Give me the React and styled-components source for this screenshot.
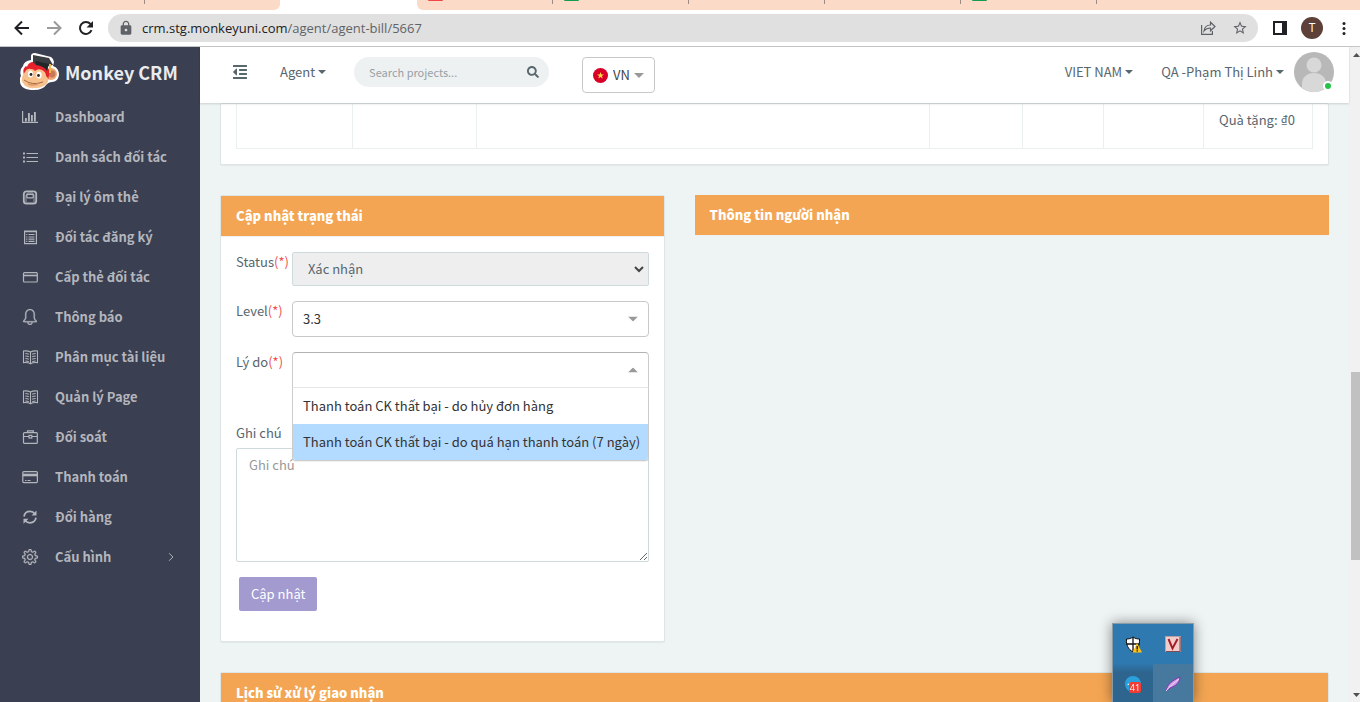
import React, { useState } from 'react';
import styled, { createGlobalStyle, css } from 'styled-components';
import { FaOutdent, FaSearch } from 'react-icons/fa';
import { SlBell, SlSettings } from 'react-icons/sl';
import { MdLock, MdStarOutline } from 'react-icons/md';

const GlobalStyle = createGlobalStyle`
    *, *::before, *::after{
        box-sizing: border-box;
    }
    body{
        margin: 0;
        overflow: hidden;
        background: #eef3f4;
    }
    body, button, input, select, textarea{
        font-family: "Noto Sans CJK SC", "Noto Sans", sans-serif;
        font-size: 13px;
        line-height: 20px;
        color: #58666e;
    }
    a{
        color: inherit;
        text-decoration: none;
    }
`;

const WindowStyle = styled.div`
    display: flex;
    flex-direction: column;
    height: 100vh;
`;

/* browser bar */

const TabStripStyle = styled.div`
    display: flex;
    height: 10px;
    flex: none;
    background: #fff;
`;

const TabGroupStyle = styled.div`
    display: flex;
    flex: ${props => props.$grow ? '1' : '0 0 280px'};
    background: #fcdac8;
    border-radius: ${props => props.$grow ? '0 0 0 6px' : '0 0 6px 0'};
`;

const TabStyle = styled.div`
    width: ${props => props.$width || 136}px;
    height: 4px;
    padding-left: 11px;
    border-right: 1px solid #9b8a82;

    &::before{
        content: '';
        display: block;
        width: 15px;
        height: 1px;
        border-radius: 0 0 2px 2px;
        background: ${props => props.$mark || 'transparent'};
    }
`;

const ActiveTab = styled.div`
    flex: 0 0 137px;
    background: #fff;
`;

const ToolbarStyle = styled.div`
    display: flex;
    align-items: center;
    gap: 14px;
    flex: none;
    height: 37px;
    padding: 0 8px 0 14px;
    background: #fff;
    border-bottom: 1px solid #c6c6c6;
`;

const ToolGroup = styled.div`
    display: flex;
    align-items: center;
    gap: ${props => props.$gap}px;
`;

const ToolButton = styled.button`
    display: flex;
    align-items: center;
    justify-content: center;
    width: 16px;
    height: 16px;
    padding: 0;
    border: 0;
    background: none;
    color: ${props => props.$color || '#202124'};
`;

const AddressStyle = styled.div`
    display: flex;
    align-items: center;
    flex: 1;
    height: 28px;
    padding: 0 10px;
    border-radius: 14px;
    background: #e0e0e0;
    color: #5f6368;

    p{
        flex: 1;
        margin: 0 0 0 8px;
        font: 13px/20px "Open Sans", "Noto Sans", sans-serif;
    }
    b{
        font-weight: normal;
        color: #202124;
    }
`;

const ProfileStyle = styled.button`
    width: 22px;
    height: 22px;
    padding: 0;
    border: 0;
    border-radius: 50%;
    background: #5d4037;
    color: #fff;
    font: 12px/22px "Open Sans", sans-serif;
`;

/* application */

const AppStyle = styled.div`
    display: flex;
    flex: 1;
    min-height: 0;
`;

const SidebarStyle = styled.nav`
    flex: 0 0 200px;
    background: #3a3f51;
    color: #b4b6bd;

    ul{
        margin: 0;
        padding: 0;
        list-style: none;
    }
`;

const BrandStyle = styled.a`
    display: flex;
    align-items: center;
    gap: 5px;
    height: 50px;
    padding-left: 20px;
    color: #eaebed;
    font-size: 18px;
    font-weight: bold;
`;

const NavLink = styled.a`
    display: flex;
    align-items: center;
    height: 40px;
    padding: 0 24px 0 22px;
    font-weight: bold;

    svg{
        flex: none;
    }
    span{
        flex: 1;
        margin-left: 17px;
    }
`;

const MainStyle = styled.div`
    display: flex;
    flex-direction: column;
    flex: 1;
    min-width: 0;
`;

const HeaderStyle = styled.header`
    position: relative;
    z-index: 1;
    display: flex;
    flex: none;
    height: 56px;
    padding: 0 15px 0 32px;
    background: #fff;
    box-shadow: 0 1px 2px rgba(0, 0, 0, 0.15);
`;

const HeaderButton = styled.button`
    display: flex;
    align-items: center;
    gap: 3px;
    height: 50px;
    padding: 0;
    margin-right: ${props => props.$gap || 0}px;
    border: 0;
    background: none;
    white-space: nowrap;
`;

const SearchStyle = styled.form`
    display: flex;
    align-items: center;
    width: 195px;
    height: 30px;
    margin: 10px 33px 0 0;
    padding: 0 10px 0 15px;
    border-radius: 15px;
    background: #edf1f2;

    input{
        flex: 1;
        min-width: 0;
        padding: 0;
        border: 0;
        outline: 0;
        background: none;
        font-size: 11px;
    }
    input::placeholder{
        color: #98a0a4;
    }
    button{
        display: flex;
        padding: 0;
        border: 0;
        background: none;
    }
`;

const LanguageStyle = styled.label`
    display: flex;
    align-items: center;
    width: 73px;
    height: 36px;
    margin: 10px auto 0 0;
    padding: 0 10px;
    border: 1px solid #c8c8c8;
    border-radius: 4px;

    select{
        flex: 1;
        min-width: 0;
        padding: 0 0 0 5px;
        border: 0;
        appearance: none;
        background: none;
        color: #444;
    }
`;

const AvatarStyle = styled.div`
    position: relative;
    height: 40px;
    margin-top: 5px;

    i{
        position: absolute;
        right: 1px;
        bottom: 1px;
        width: 10px;
        height: 10px;
        border: 2px solid #fff;
        border-radius: 50%;
        background: #27c24c;
    }
`;

const ContentStyle = styled.main`
    flex: 1;
    min-height: 0;
    overflow: hidden;
    padding: 0 20px;
    background: #eef3f4;
`;

const PanelStyle = styled.section`
    margin-bottom: 30px;
    border: 1px solid #dee5e7;
    border-radius: 2px;
    background: #fff;
    box-shadow: 0 1px 1px rgba(0, 0, 0, 0.05);
`;

const PanelTitle = styled.h2`
    margin: 0;
    padding: 10px 15px;
    border-bottom: 1px solid #edf1f2;
    background: #f3a553;
    color: #fff;
    font-size: 13px;
    line-height: 20px;
    font-weight: 900;
`;

const TableWrapStyle = styled.div`
    padding: 0 15px 15px;
`;

const BillTable = styled.table`
    width: 100%;
    table-layout: fixed;
    border-collapse: collapse;

    td{
        height: 44px;
        padding: 6px 15px;
        border: 1px solid #eaeff0;
        border-top: 0;
        vertical-align: top;
        white-space: nowrap;
    }
`;

const RowStyle = styled.div`
    display: flex;
    align-items: flex-start;
    margin: 0 -15px;
`;

const ColumnStyle = styled.div`
    flex: 0 0 calc(100% * ${props => props.$span} / 12);
    padding: 0 15px;
`;

const FormStyle = styled.form`
    display: flex;
    flex-direction: column;
    padding: 15px 15px 30px;
`;

const FieldStyle = styled.div`
    display: flex;
    align-items: flex-start;
    margin-bottom: 15px;

    > label{
        flex: 0 0 56px;
        white-space: nowrap;
    }
    em{
        font-style: normal;
        color: #f05050;
    }
`;

const SelectBox = styled.div`
    position: relative;
    flex: 1;

    > svg{
        position: absolute;
        top: 50%;
        right: ${props => props.$native ? 4 : 11}px;
        transform: translateY(-50%);
        pointer-events: none;
    }
`;

const SelectStyle = styled.select`
    display: block;
    width: 100%;
    height: 36px;
    padding: 0 10px;
    border: 1px solid #c8c8c8;
    border-radius: 4px;
    outline: 0;
    appearance: none;
    background: #fff;
    color: #333;

    &:disabled{
        height: 34px;
        padding: 0 15px;
        border-color: #cfdadd;
        border-radius: 2px;
        background: #eee;
        color: #58666e;
        opacity: 1;
    }
    ${props => props.$open && css`
        border-color: #b3b3b3 #ccc #e6e6e6;
        border-radius: 4px 4px 0 0;
    `}
`;

const MenuStyle = styled.ul`
    position: absolute;
    z-index: 2;
    top: 100%;
    left: 0;
    right: 0;
    margin: 0;
    padding: 0;
    overflow: hidden;
    list-style: none;
    border: 1px solid #ccc;
    border-top: 0;
    border-radius: 0 0 4px 4px;
    background: #fff;
    box-shadow: 0 1px 0 rgba(0, 0, 0, 0.06);
`;

const OptionStyle = styled.li`
    padding: 8px 10px;
    background: ${props => props.$active ? '#b3dbff' : '#fff'};
    color: #333;
    white-space: nowrap;
`;

const NoteLabel = styled.label`
    margin-top: 20px;
    margin-bottom: 5px;
`;

const NoteStyle = styled.textarea`
    height: 114px;
    margin-bottom: 15px;
    padding: 6px 12px;
    border: 1px solid #cfdadd;
    border-radius: 2px;
    outline: 0;
    resize: vertical;

    &::placeholder{
        color: #999;
    }
`;

const SubmitButton = styled.button`
    align-self: flex-start;
    height: 34px;
    margin-left: 3px;
    padding: 0 12px;
    border: 0;
    border-radius: 2px;
    background: #a39bd0;
    color: #fff;
`;

const ScrollbarStyle = styled.div`
    display: flex;
    flex-direction: column;
    align-items: flex-end;
    flex: 0 0 11px;
    overflow: hidden;
    padding: 6px 0 5px;
    background: #f1f1f1;

    i{
        width: 9px;
        height: 188px;
        margin: 315px 0 auto;
        background: #c1c1c1;
    }
`;

const TrayStyle = styled.div`
    position: fixed;
    z-index: 3;
    right: 166px;
    bottom: 0;
    display: grid;
    grid-template-columns: 1fr 1fr;
    grid-template-rows: 40px 38px;
    width: 82px;
    border: 1px solid #8a9ba8;
    border-bottom: 0;
    background: linear-gradient(#2f79b1 50%, #2d658e 62%);
    box-shadow: 0 0 12px rgba(0, 0, 0, 0.45);

    button{
        display: flex;
        justify-content: center;
        padding: 12px 0 0;
        border: 0;
        background: none;
    }
    button:last-child{
        background: #47799f;
    }
`;

const Caret = ({ up, color = '#999', width = 10, height = 5 }) => (
    <svg width={width} height={height} viewBox="0 0 10 5" preserveAspectRatio="none">
        <path d={up ? 'M0 5h10L5 0z' : 'M0 0h10L5 5z'} fill={color} />
    </svg>
);

const Icon = ({ children, size = 16, width = 1.2 }) => (
    <svg width={size} height={size} viewBox="0 0 16 16" fill="none" stroke="currentColor" strokeWidth={width}>{children}</svg>
);

const ChartIcon = () => (
    <Icon>
        <path d="M.6 2v11.4H16" />
        <path d="M3.9 12.5V9M6.9 12.5V4M9.9 12.5V6M12.9 12.5V3" strokeWidth="1.9" />
    </Icon>
);
const ListIcon = () => (
    <Icon>
        <path d="M4.5 4.5H16M4.5 8.5H16M4.5 12.5H16" />
        <path d="M1 4.5h2M1 8.5h2M1 12.5h2" strokeWidth="2" />
    </Icon>
);
const DiskIcon = () => (
    <Icon>
        <rect x="1.8" y="2.3" width="12.4" height="12.2" rx="2.6" strokeWidth="1.8" />
        <rect x="4.8" y="5.4" width="6.5" height="3.4" rx="1" />
        <path d="M4 13V6l1.5-2h5.2L12 6v7" strokeWidth=".8" />
    </Icon>
);
const SheetIcon = () => (
    <Icon>
        <path d="M2.6 2h11.8v12.6H2.6zM2 2.6h13" />
        <path d="M6.5 5.5h6M6.5 8h6M6.5 10.2h6M6.5 12.4h6" />
        <path d="M4.2 5.5h1.2M4.2 8h1.2M4.2 10.2h1.2M4.2 12.4h1.2" />
    </Icon>
);
const CardIcon = () => (
    <Icon><rect x="1.5" y="3.7" width="13.8" height="9.3" rx="1" /><path d="M2 6.5h13" strokeWidth="1.6" /></Icon>
);
const BookIcon = () => (
    <Icon width={1.1}>
        <path d="M8.5 3C6.5 1.8 4 1.8 1.5 2v11.6c2.5-.2 5 0 7 1.2 2-1.2 4.5-1.4 7-1.2V2c-2.5-.2-5-.2-7 1zM8.5 3v12" />
        <path d="M3.3 4.5c1.5 0 2.5.2 3.5.7M3.3 7c1.5 0 2.5.2 3.5.7M3.3 9.5c1.5 0 2.5.2 3.5.7M3.3 12c1.5 0 2.5.2 3.5.7" />
        <path d="M13.7 4.5c-1.5 0-2.5.2-3.5.7M13.7 7c-1.5 0-2.5.2-3.5.7M13.7 9.5c-1.5 0-2.5.2-3.5.7M13.7 12c-1.5 0-2.5.2-3.5.7" />
    </Icon>
);
const CaseIcon = () => (
    <Icon>
        <rect x="1.5" y="3.6" width="13.8" height="10.8" rx="1" />
        <path d="M5.5 3.5V1.8h5.8v1.7M1.5 7.5H7M10 7.5h5.3" />
        <rect x="7" y="6.4" width="2.8" height="2.6" />
    </Icon>
);
const PayIcon = () => (
    <Icon>
        <rect x=".8" y="2.6" width="14.6" height="11" rx="1" />
        <path d="M1 6h14.5" strokeWidth="2.6" />
        <path d="M3 11.5h1.5M5.5 11.5h3" strokeWidth="1" />
    </Icon>
);
const RefreshIcon = () => (
    <Icon width={1.7}>
        <path d="M2 7.5C2.5 4.5 5 2.4 8 2.4c2.2 0 3.8 1 5 2.6M14 8.7c-.5 3-3 5.1-6 5.1-2.2 0-3.8-1-5-2.6" />
        <path d="M14.5 1.5v5h-5zM1.5 14.8v-5h5z" fill="currentColor" stroke="none" />
    </Icon>
);

const MonkeyLogo = () => (
    <svg width="40" height="38" viewBox="0 0 40 38">
        <path d="M11 3Q11 0 15 0L31 4q3 2 3 5l-1 4q6 2 6 9-1 7-7 7-3 0-5 2-4 6-13 6Q1 37 0 29q-1-3 1-6-2-6 2-10 1-5 8-6z" fill="#fff" />
        <circle cx="31" cy="21" r="6" fill="#eda777" />
        <circle cx="32" cy="21" r="3.4" fill="#c87857" />
        <path d="M4 22q-2-6 2-9l1 1q1-4 5-5l12 1 6 8-2 9H6z" fill="#e8222a" />
        <path d="M2 25q0-3 3-6 2-4 6-3 3 0 4 2 3-3 7-1 4 2 4 6 3 2 2 6-4 6-13 6-9 1-12-5-2-2-1-5z" fill="#f7c28e" />
        <ellipse cx="10.5" cy="21" rx="2.5" ry="3.6" fill="#fff" />
        <ellipse cx="19" cy="22" rx="2.7" ry="3.6" fill="#fff" />
        <circle cx="11" cy="21.5" r="1.4" fill="#2b2223" />
        <circle cx="18.5" cy="22.5" r="1.4" fill="#2b2223" />
        <path d="M4 27q8 6 19 2" fill="none" stroke="#a9683f" strokeWidth="1" />
        <path d="M8 31q5 2 10 0" fill="none" stroke="#de976a" strokeWidth="1.5" />
        <path d="M13 2l16 3 4 7-9 2-11-4z" fill="#3a3d41" />
        <path d="M16 8q-1 3 0 4 8 1 11 6l2-7z" fill="#24272a" />
        <path d="M30 11v9" stroke="#f0b94b" strokeWidth="2" />
    </svg>
);

const menuItems = [
    { label: 'Dashboard', icon: <ChartIcon /> },
    { label: 'Danh sách đối tác', icon: <ListIcon /> },
    { label: 'Đại lý ôm thẻ', icon: <DiskIcon /> },
    { label: 'Đối tác đăng ký', icon: <SheetIcon /> },
    { label: 'Cấp thẻ đối tác', icon: <CardIcon /> },
    { label: 'Thông báo', icon: <SlBell size={16} strokeWidth={20} stroke="currentColor" /> },
    { label: 'Phân mục tài liệu', icon: <BookIcon /> },
    { label: 'Quản lý Page', icon: <BookIcon /> },
    { label: 'Đối soát', icon: <CaseIcon /> },
    { label: 'Thanh toán', icon: <PayIcon /> },
    { label: 'Đổi hàng', icon: <RefreshIcon /> },
    { label: 'Cấu hình', icon: <SlSettings size={16} strokeWidth={20} stroke="currentColor" />, children: true },
];

const reasons = [
    'Thanh toán CK thất bại - do hủy đơn hàng',
    'Thanh toán CK thất bại - do quá hạn thanh toán (7 ngày)',
];

const columnWidths = [116, 124, null, 93, 81, 100, 109];

function BrowserBar() {
    return (
        <>
            <TabStripStyle>
                <TabGroupStyle><TabStyle $width={145} /></TabGroupStyle>
                <ActiveTab />
                <TabGroupStyle $grow>
                    <TabStyle $mark="#f04848" />
                    <TabStyle $mark="#169b54" />
                    <TabStyle />
                    <TabStyle />
                    <TabStyle $mark="#169b54" />
                </TabGroupStyle>
            </TabStripStyle>
            <ToolbarStyle>
                <ToolGroup $gap={16}>
                    <ToolButton aria-label="Back">
                        <Icon width={2}><path d="M15 8H2M8 1.5 1.5 8 8 14.5" /></Icon>
                    </ToolButton>
                    <ToolButton aria-label="Forward" $color="#9a9a9a">
                        <Icon width={2}><path d="M1 8h13M8 1.5 14.5 8 8 14.5" /></Icon>
                    </ToolButton>
                    <ToolButton aria-label="Reload">
                        <Icon width={2}>
                            <path d="M13.5 10.2A6 6 0 1 1 12.5 4" />
                            <path d="M15 1v6.5H8.5z" fill="currentColor" stroke="none" />
                        </Icon>
                    </ToolButton>
                </ToolGroup>
                <AddressStyle>
                    <MdLock size={16} />
                    <p><b>crm.stg.monkeyuni.com</b>/agent/agent-bill/5667</p>
                    <ToolGroup $gap={16}>
                        <ToolButton aria-label="Share" $color="#5f6368">
                            <Icon>
                                <path d="M1.6 5v9.4h10.8V11" />
                                <path d="M4 11c.5-4 3-6 6.5-6V2.2L15 6.5l-4.5 4.3V8C7.5 8 5.5 9 4 11z" />
                            </Icon>
                        </ToolButton>
                        <ToolButton aria-label="Bookmark" $color="#5f6368"><MdStarOutline size={18} /></ToolButton>
                    </ToolGroup>
                </AddressStyle>
                <ToolGroup $gap={13}>
                    <ToolButton aria-label="Side panel">
                        <Icon width={2}><path d="M2 2h12v12H2z" /><path d="M12 2v12" strokeWidth="4" /></Icon>
                    </ToolButton>
                    <ProfileStyle>T</ProfileStyle>
                    <ToolButton aria-label="Menu">
                        <Icon>
                            <g fill="currentColor" stroke="none">
                                <circle cx="8" cy="3.5" r="1.5" />
                                <circle cx="8" cy="8.5" r="1.5" />
                                <circle cx="8" cy="13.5" r="1.5" />
                            </g>
                        </Icon>
                    </ToolButton>
                </ToolGroup>
            </ToolbarStyle>
        </>
    );
}

function Sidebar() {
    return (
        <SidebarStyle>
            <BrandStyle href="#"><MonkeyLogo />Monkey CRM</BrandStyle>
            <ul>
                {
                    menuItems.map(item => (
                        <li key={item.label}>
                            <NavLink href="#">
                                {item.icon}
                                <span>{item.label}</span>
                                {item.children && <Icon size={10}><path d="M5 2l6 6-6 6" strokeWidth="1.6" /></Icon>}
                            </NavLink>
                        </li>
                    ))
                }
            </ul>
        </SidebarStyle>
    );
}

function Header() {
    return (
        <HeaderStyle>
            <HeaderButton $gap={32} aria-label="Toggle menu"><FaOutdent size={16} /></HeaderButton>
            <HeaderButton $gap={28}>Agent<Caret color="#58666e" width={8} height={4} /></HeaderButton>
            <SearchStyle>
                <input aria-label="Search" placeholder="Search projects..." />
                <button aria-label="Submit search" type="button"><FaSearch size={12} /></button>
            </SearchStyle>
            <LanguageStyle>
                <svg width="15" height="15" viewBox="0 0 15 15">
                    <circle cx="7.5" cy="7.5" r="7.5" fill="#d80027" />
                    <path d="M7.5 4l.9 2.5h2.6L8.9 8.1l.8 2.5-2.2-1.5-2.2 1.5.8-2.5L4 6.5h2.6z" fill="#ffda44" />
                </svg>
                <select aria-label="Language"><option>VN</option></select>
                <Caret />
            </LanguageStyle>
            <HeaderButton $gap={28}>VIET NAM<Caret color="#58666e" width={8} height={4} /></HeaderButton>
            <HeaderButton $gap={10}>QA -Phạm Thị Linh<Caret color="#58666e" width={8} height={4} /></HeaderButton>
            <AvatarStyle>
                <svg width="40" height="40" viewBox="0 0 40 40">
                    <circle cx="20" cy="20" r="20" fill="#b8b8b8" />
                    <circle cx="20" cy="13" r="7.5" fill="#d8d8d8" />
                    <path d="M8 36V32c0-7 5-11 12-11s12 4 12 11v4a20 20 0 0 1-24 0z" fill="#d8d8d8" />
                </svg>
                <i />
            </AvatarStyle>
        </HeaderStyle>
    );
}

function StatusForm() {
    const [active, setActive] = useState(1);

    return (
        <FormStyle>
            <FieldStyle>
                <label htmlFor="status">Status<em>(*)</em></label>
                <SelectBox $native>
                    <SelectStyle id="status" disabled><option>Xác nhận</option></SelectStyle>
                    <svg width="12" height="12" viewBox="0 0 12 12"><path d="M2 4l4 4 4-4" fill="none" stroke="#444" strokeWidth="2" /></svg>
                </SelectBox>
            </FieldStyle>
            <FieldStyle>
                <label htmlFor="level">Level<em>(*)</em></label>
                <SelectBox>
                    <SelectStyle id="level"><option>3.3</option></SelectStyle>
                    <Caret />
                </SelectBox>
            </FieldStyle>
            <FieldStyle>
                <label htmlFor="reason">Lý do<em>(*)</em></label>
                <SelectBox>
                    <SelectStyle id="reason" $open><option></option></SelectStyle>
                    <Caret up />
                    <MenuStyle role="listbox">
                        {
                            reasons.map((reason, index) => (
                                <OptionStyle
                                    key={reason}
                                    role="option"
                                    aria-selected={index === active}
                                    $active={index === active}
                                    onMouseEnter={() => setActive(index)}
                                >
                                    {reason}
                                </OptionStyle>
                            ))
                        }
                    </MenuStyle>
                </SelectBox>
            </FieldStyle>
            <NoteLabel htmlFor="note">Ghi chú</NoteLabel>
            <NoteStyle id="note" placeholder="Ghi chú" />
            <SubmitButton type="button">Cập nhật</SubmitButton>
        </FormStyle>
    );
}

function Tray() {
    return (
        <TrayStyle>
            <button aria-label="Security">
                <svg width="17" height="17" viewBox="0 0 17 17">
                    <path d="M8 1c2 1.5 4 2 6.5 2 .3 6-1.5 10-6.5 13C3 13 1 9 1.5 3 4 3 6 2.5 8 1z" fill="#fff" stroke="#111" />
                    <path d="M8 1v15M1.5 8h13" stroke="#111" strokeWidth="1.3" />
                    <path d="M12 7l5 9.5H7.5z" fill="#fdc116" />
                    <path d="M12.2 10v3.5M12.2 14.3v1.2" stroke="#111" strokeWidth="1.3" />
                </svg>
            </button>
            <button aria-label="Keyboard">
                <svg width="16" height="16" viewBox="0 0 16 16">
                    <path d="M.5.5h15v15H.5z" fill="#f3cccc" stroke="#b9a0a6" />
                    <path d="M15 1v14.5H1" fill="none" stroke="#7c4b54" />
                    <path d="M3.5 3l4 9.5L12.5 3" fill="none" stroke="#a51f27" strokeWidth="2" />
                </svg>
            </button>
            <button aria-label="Messages">
                <svg width="18" height="18" viewBox="0 0 18 18">
                    <circle cx="9" cy="8" r="8" fill="#2aa1da" />
                    <path d="M3 8.5l4-2v3z" fill="#fff" />
                    <rect x="5" y="6" width="12" height="11" rx="2.5" fill="#f23c34" />
                    <text x="11" y="15" fontSize="9" fill="#fff" textAnchor="middle" fontFamily="Open Sans, sans-serif">41</text>
                </svg>
            </button>
            <button aria-label="Feather">
                <svg width="16" height="16" viewBox="0 0 16 16">
                    <path d="M1 15C2 8 8 4 15 1c0 5-4 9-10 11z" fill="#cf9ce4" stroke="#7a36ad" />
                    <path d="M1 15C5 10 9 7 14 3" stroke="#f0dcf7" fill="none" />
                </svg>
            </button>
        </TrayStyle>
    );
}

export default function App() {
    return (
        <WindowStyle>
            <GlobalStyle />
            <BrowserBar />
            <AppStyle>
                <Sidebar />
                <MainStyle>
                    <Header />
                    <ContentStyle>
                        <PanelStyle>
                            <TableWrapStyle>
                                <BillTable>
                                    <colgroup>
                                        {columnWidths.map((width, index) => <col key={index} width={width || undefined} />)}
                                    </colgroup>
                                    <tbody>
                                        <tr><td /><td /><td /><td /><td /><td /><td>Quà tặng: ₫0</td></tr>
                                    </tbody>
                                </BillTable>
                            </TableWrapStyle>
                        </PanelStyle>
                        <RowStyle>
                            <ColumnStyle $span={5}>
                                <PanelStyle>
                                    <PanelTitle>Cập nhật trạng thái</PanelTitle>
                                    <StatusForm />
                                </PanelStyle>
                            </ColumnStyle>
                            <ColumnStyle $span={7}>
                                <PanelTitle>Thông tin người nhận</PanelTitle>
                            </ColumnStyle>
                        </RowStyle>
                        <PanelStyle>
                            <PanelTitle>Lịch sử xử lý giao nhận</PanelTitle>
                        </PanelStyle>
                    </ContentStyle>
                </MainStyle>
                <ScrollbarStyle>
                    <Caret up color="#505050" width={7} height={4} />
                    <i />
                    <Caret color="#505050" width={7} height={4} />
                </ScrollbarStyle>
            </AppStyle>
            <Tray />
        </WindowStyle>
    );
}
